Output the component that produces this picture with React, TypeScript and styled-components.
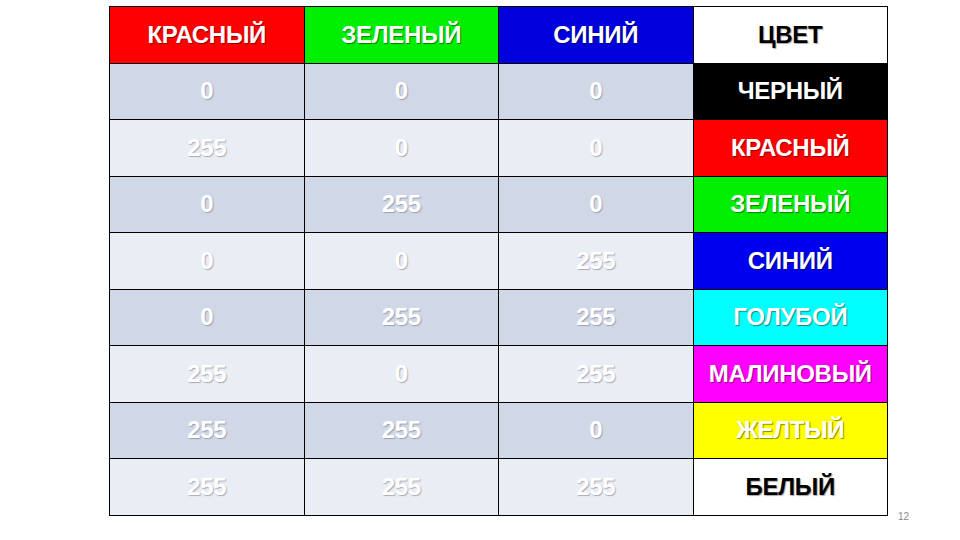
import React from "react";
import styled, { createGlobalStyle } from "styled-components";

const GlobalStyle = createGlobalStyle`
  html, body {
    margin: 0;
    padding: 0;
    background: #ffffff;
  }
`;

type Row = { r: string; g: string; b: string; name: string; bg: string; dark?: boolean };

const rows: Row[] = [
  { r: "0", g: "0", b: "0", name: "ЧЕРНЫЙ", bg: "#000000" },
  { r: "255", g: "0", b: "0", name: "КРАСНЫЙ", bg: "#ff0000" },
  { r: "0", g: "255", b: "0", name: "ЗЕЛЕНЫЙ", bg: "#00ee00" },
  { r: "0", g: "0", b: "255", name: "СИНИЙ", bg: "#0000ee" },
  { r: "0", g: "255", b: "255", name: "ГОЛУБОЙ", bg: "#00ffff" },
  { r: "255", g: "0", b: "255", name: "МАЛИНОВЫЙ", bg: "#ff00ff" },
  { r: "255", g: "255", b: "0", name: "ЖЕЛТЫЙ", bg: "#ffff00" },
  { r: "255", g: "255", b: "255", name: "БЕЛЫЙ", bg: "#ffffff", dark: true },
];

function App() {
  return (
    <>
      <GlobalStyle />
      <Slide>
        <Table>
          <Cell $bg="#ff0000">КРАСНЫЙ</Cell>
          <Cell $bg="#00ee00">ЗЕЛЕНЫЙ</Cell>
          <Cell $bg="#0000dd">СИНИЙ</Cell>
          <Cell $bg="#ffffff" $dark>ЦВЕТ</Cell>
          {rows.map((row, i) => {
            const band = i % 2 === 0 ? "#d0d8e8" : "#e9edf4";
            return (
              <React.Fragment key={row.name}>
                <Cell $bg={band} $soft>{row.r}</Cell>
                <Cell $bg={band} $soft>{row.g}</Cell>
                <Cell $bg={band} $soft>{row.b}</Cell>
                <Cell $bg={row.bg} $dark={row.dark}>{row.name}</Cell>
              </React.Fragment>
            );
          })}
        </Table>
        <PageNum>12</PageNum>
      </Slide>
    </>
  );
}

const Slide = styled.div`
  width: 960px;
  height: 540px;
  display: flex;
  align-items: flex-start;
  padding: 6px 0 0 109px;
  box-sizing: border-box;
`;

const Table = styled.div`
  display: grid;
  grid-template-columns: repeat(4, 194.5px);
  grid-auto-rows: 56.5px;
  width: 779px;
  border-top: 1px solid #000;
  border-left: 1.5px solid #000;
  box-sizing: border-box;
`;

const Cell = styled.div<{ $bg: string; $dark?: boolean; $soft?: boolean }>`
  display: flex;
  align-items: center;
  justify-content: center;
  background: ${(p) => p.$bg};
  border-right: 1px solid #000;
  border-bottom: 1px solid #000;
  box-sizing: border-box;
  font-family: "Liberation Sans", Arial, sans-serif;
  font-weight: bold;
  font-size: 24px;
  letter-spacing: -0.3px;
  color: ${(p) => (p.$dark ? "#000000" : "#ffffff")};
  text-shadow: ${(p) =>
    p.$dark
      ? "1px 1px 1px rgba(0,0,0,0.35)"
      : p.$soft
      ? "1px 1px 1px rgba(90,90,110,0.45)"
      : "1px 1px 1px rgba(0,0,0,0.45)"};
`;

const PageNum = styled.div`
  align-self: flex-end;
  font-family: "Liberation Sans", Arial, sans-serif;
  font-size: 10px;
  color: #8a8a8a;
  margin: 0 0 18px 10px;
`;

export default App;
